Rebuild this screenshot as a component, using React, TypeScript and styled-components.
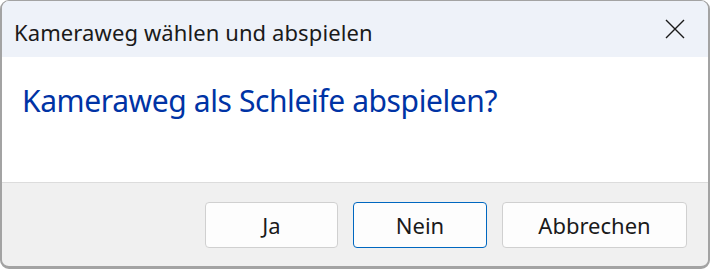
import React from 'react';
import styled, { createGlobalStyle } from 'styled-components';

const GlobalStyle = createGlobalStyle`
  html, body {
    margin: 0;
    padding: 0;
    background: #ffffff;
  }
  * {
    box-sizing: border-box;
  }
`;

const Window = styled.div`
  width: 710px;
  height: 269px;
  display: flex;
  flex-direction: column;
  border-style: solid;
  border-color: #a3a3a3;
  border-width: 1px 2px 3px 2px;
  border-radius: 9px;
  overflow: hidden;
  font-family: 'Noto Sans', 'Open Sans', sans-serif;
  background: #f0f0f0;
`;

const TitleBar = styled.div`
  height: 56px;
  flex: none;
  display: flex;
  align-items: center;
  justify-content: space-between;
  padding-left: 12px;
  padding-right: 22px;
  background: #eef2f9;
`;

const Title = styled.span`
  font-size: 22px;
  line-height: 30px;
  letter-spacing: 0.1px;
  color: #1a1a1a;
  margin-top: 6px;
`;

const CloseButton = styled.button`
  border: none;
  background: transparent;
  padding: 0;
  width: 22px;
  height: 22px;
  display: flex;
  align-items: center;
  justify-content: center;
`;

const Content = styled.div`
  height: 126px;
  flex: none;
  background: #ffffff;
  border-bottom: 1px solid #dcdcdc;
  padding: 24px 0 0 20px;
`;

const Instruction = styled.div`
  font-size: 30px;
  line-height: 40px;
  letter-spacing: -0.4px;
  color: #0033a5;
`;

const Footer = styled.div`
  flex: 1;
  display: flex;
  justify-content: flex-end;
  align-items: center;
  gap: 15px;
  padding-right: 21px;
`;

const DialogButton = styled.button<{ $default?: boolean; $width: number }>`
  width: ${(p) => p.$width}px;
  height: 46px;
  border-radius: 4px;
  border: 1px solid ${(p) => (p.$default ? '#0067c0' : '#d0d0d0')};
  background: #fdfdfd;
  font-family: inherit;
  font-size: 22px;
  color: #1a1a1a;
  padding: 0;
`;

const App: React.FC = () => {
  return (
    <>
      <GlobalStyle />
      <Window>
        <TitleBar>
          <Title>Kameraweg wählen und abspielen</Title>
          <CloseButton aria-label="Schließen">
            <svg width="20" height="20" viewBox="0 0 20 20">
              <path d="M1 1 L19 19 M19 1 L1 19" stroke="#1a1a1a" strokeWidth="1.4" fill="none" />
            </svg>
          </CloseButton>
        </TitleBar>
        <Content>
          <Instruction>Kameraweg als Schleife abspielen?</Instruction>
        </Content>
        <Footer>
          <DialogButton $width={133}>Ja</DialogButton>
          <DialogButton $width={134} $default>
            Nein
          </DialogButton>
          <DialogButton $width={185}>Abbrechen</DialogButton>
        </Footer>
      </Window>
    </>
  );
};

export default App;
